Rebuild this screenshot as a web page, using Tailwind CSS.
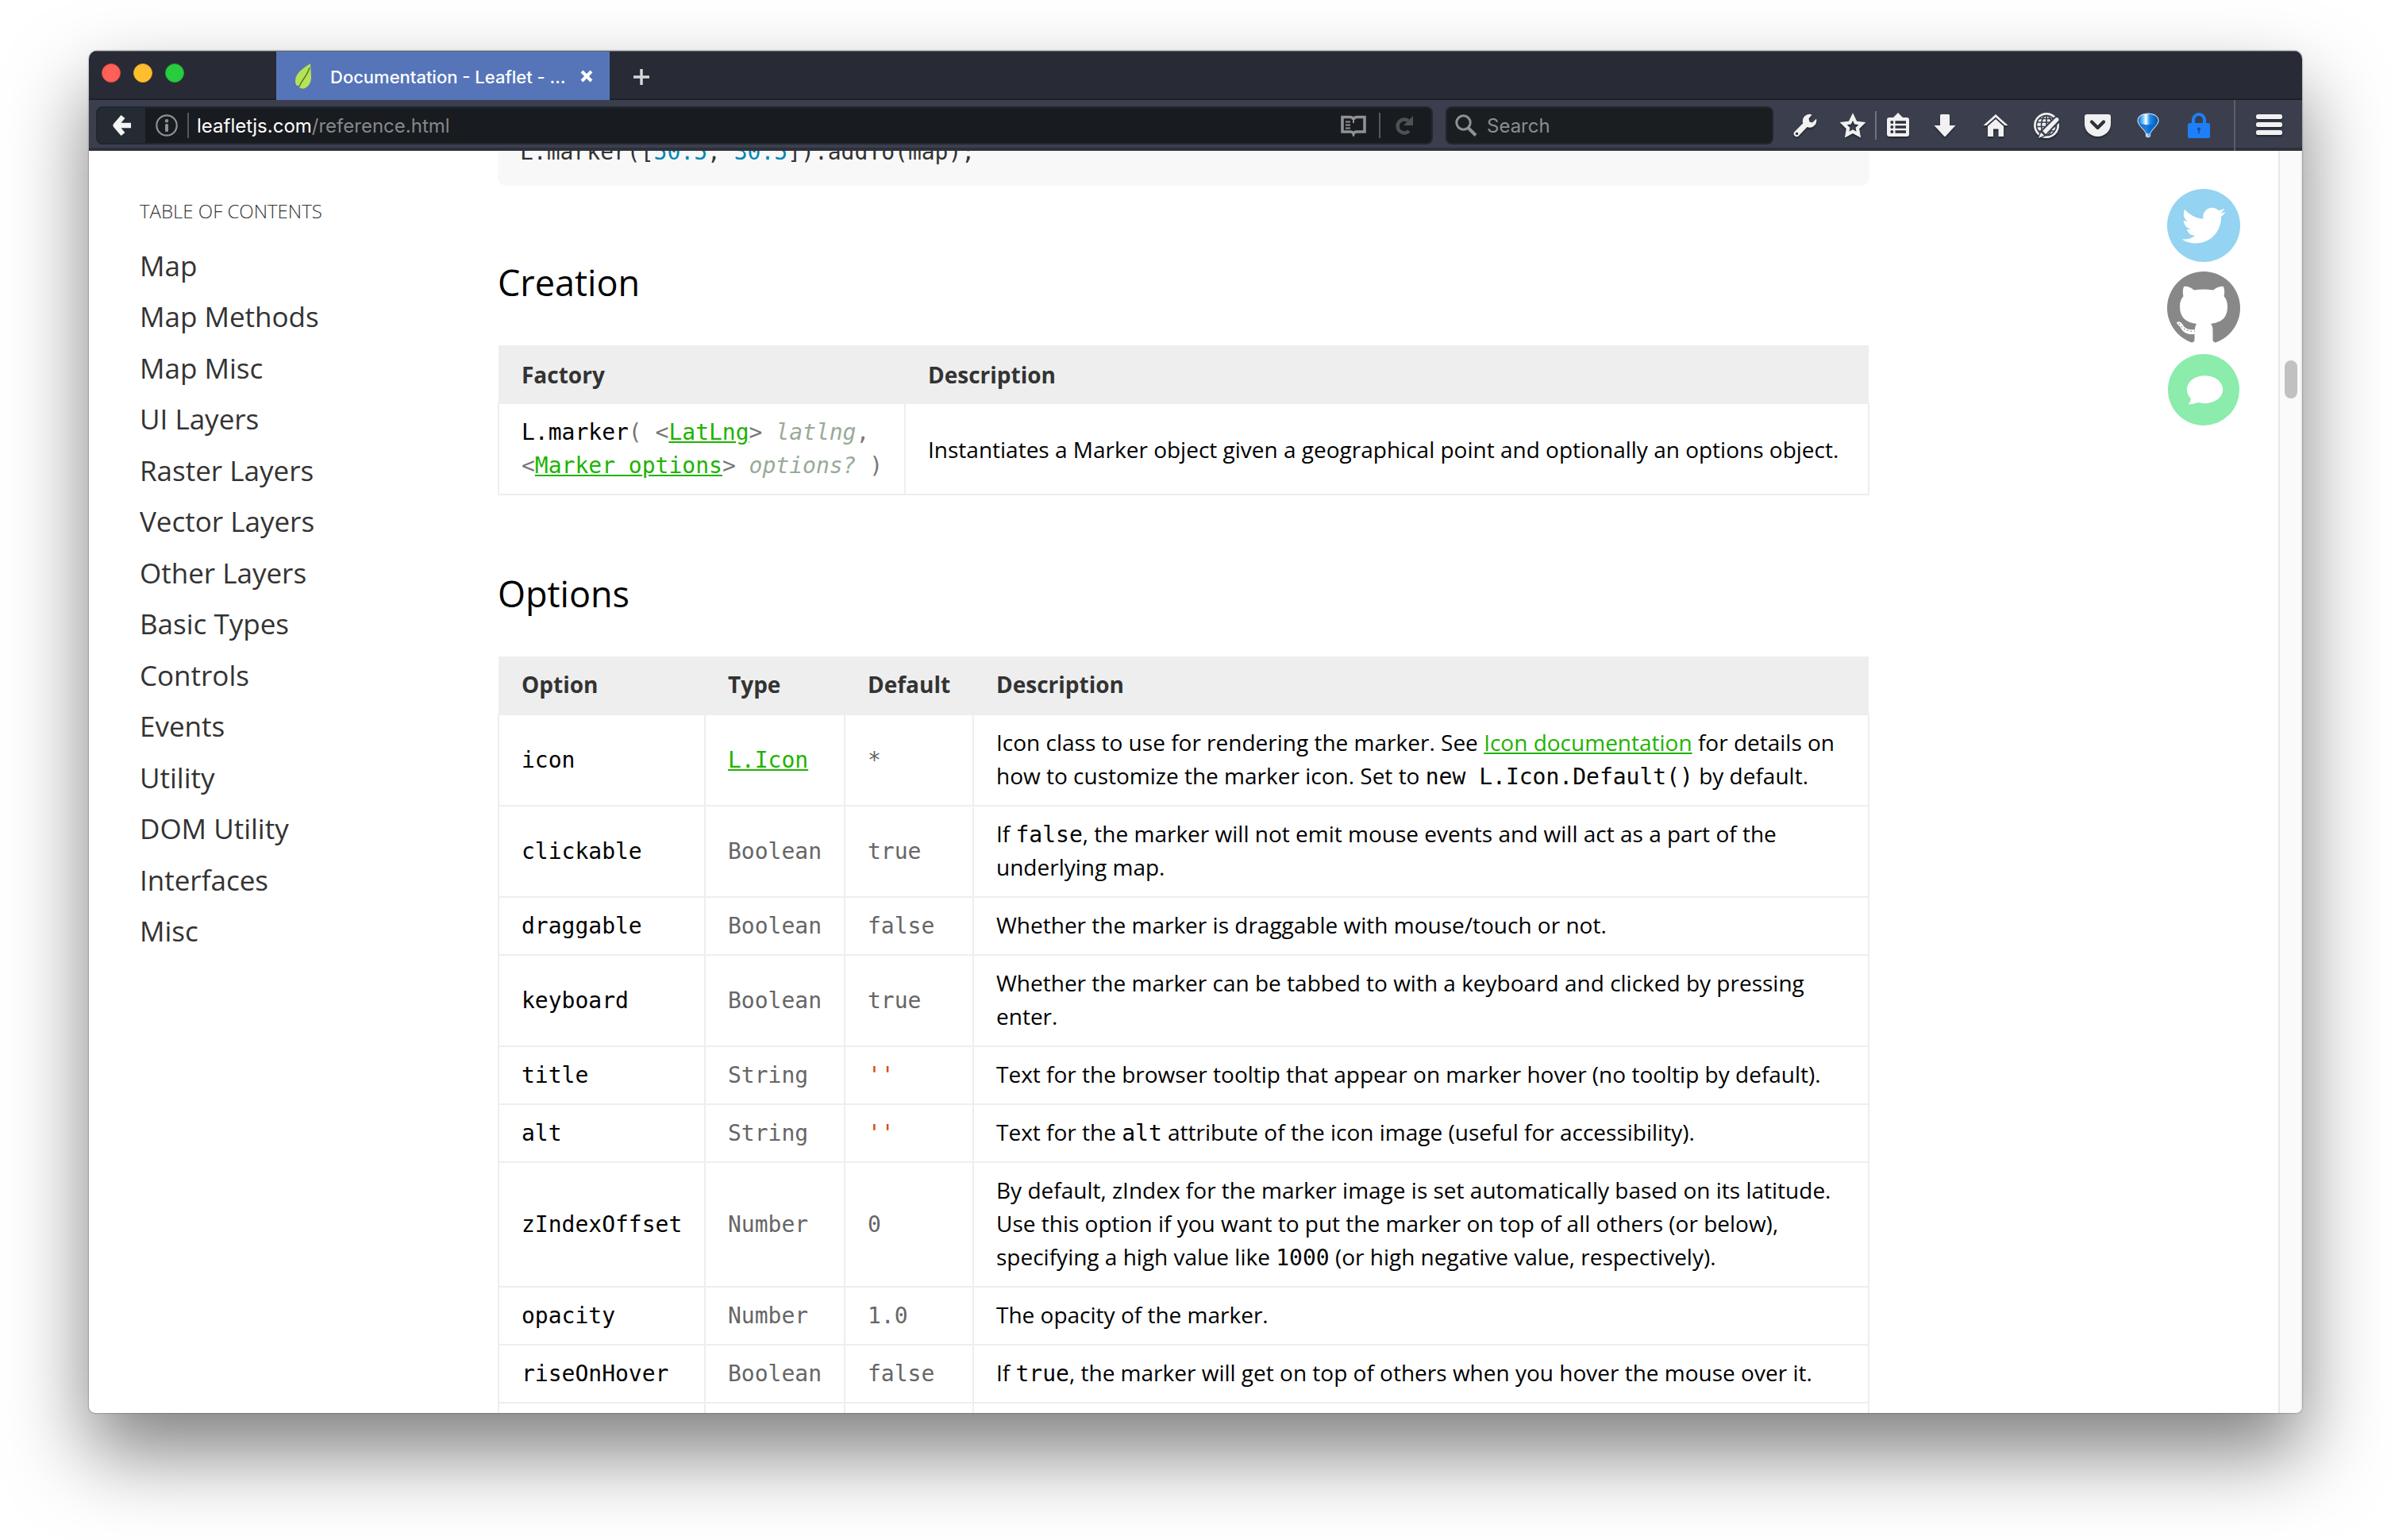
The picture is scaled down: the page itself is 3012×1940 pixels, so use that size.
<!DOCTYPE html>
<html lang="en">
<head>
<meta charset="utf-8">
<title>Documentation - Leaflet</title>
<script src="https://cdn.jsdelivr.net/npm/@tailwindcss/browser@4"></script>
</head>
<body class="h-screen overflow-hidden bg-white px-28 pt-16 pb-40 font-['Open_Sans',sans-serif] text-[28px] leading-[42px] text-black">
<div class="flex h-full flex-col overflow-hidden rounded-t-[10px] rounded-b-[8px] bg-white shadow-[0_0_2px_rgba(0,0,0,0.6),0_50px_100px_rgba(0,0,0,0.5)]">

<header class="shrink-0 font-[Inter,sans-serif]">
  <!-- Tab strip -->
  <div class="flex h-[62px] items-stretch border-t border-b-2 border-t-[#5b6068] border-b-[#1d2028] bg-[#282b35]">
    <div class="flex w-[236px] gap-4 pt-[15px] pl-4">
      <button aria-label="Close" class="size-6 rounded-full border border-[#e2463f] bg-[#ff6058]"></button>
      <button aria-label="Minimise" class="size-6 rounded-full border border-[#e1a325] bg-[#ffbe2f]"></button>
      <button aria-label="Zoom" class="size-6 rounded-full border border-[#1aab29] bg-[#29cb41]"></button>
    </div>
    <div class="-mb-0.5 flex w-[420px] items-center bg-[#5675b9] pr-[21px] pl-6 text-white">
      <svg class="h-8 w-5 shrink-0" viewBox="0 0 20 32"><path d="M19 0C10 6 0 12 0 22c0 3 1 5 2 6l2-.5C5 31 8 32 11 31.5c6-2 9-8 9-14C20 11 19 5 19 0Z" fill="#b5e358"/><path d="M18 5C15 16 9 19 5 29" stroke="#5b7a26" fill="none" stroke-width="1.5"/></svg>
      <span class="ml-6 flex-1 pt-0.5 text-[22px] leading-8 font-medium whitespace-nowrap">Documentation - Leaflet - …</span>
      <button aria-label="Close tab"><svg class="size-4" viewBox="0 0 16 16" stroke="#fff" stroke-width="4"><path d="M2 2l12 12M14 2L2 14"/></svg></button>
    </div>
    <button aria-label="New tab" class="ml-[30px] pt-1"><svg class="size-5" viewBox="0 0 20 20" stroke="#d6d7d9" stroke-width="3.5"><path d="M10 0v20M0 10h20"/></svg></button>
  </div>

  <!-- Navigation toolbar -->
  <div class="flex h-16 items-center bg-[#3b3f4d] pl-[9px] text-2xl leading-8 shadow-[inset_0_-4px_0_#2e313c]">
    <div class="flex h-12 flex-1 items-center overflow-hidden rounded-lg border-2 border-[#22262e] bg-[#181b1f]">
      <button aria-label="Back" class="flex h-full w-[60px] items-center justify-center bg-[#252b33]"><svg class="h-7 w-6" viewBox="0 0 24 28" fill="none" stroke="#f4f4f4" stroke-width="6.5" stroke-linejoin="round"><path d="M14 3L4.500 14L14 25M5 14H24"/></svg></button>
      <button aria-label="Site information" class="ml-[13px]"><svg class="size-7" viewBox="0 0 28 28"><circle cx="14" cy="14" r="12.7" fill="none" stroke="#8f9194" stroke-width="2.2"/><circle cx="14" cy="8.200" r="2.200" fill="#8f9194"/><rect x="12" y="12" width="4" height="10" rx="1.500" fill="#8f9194"/></svg></button>
      <span class="ml-3 h-8 w-0.5 bg-[#55585c]"></span>
      <span class="ml-2.5 flex-1 pt-0.5 text-[#85888b]"><span class="text-white">leafletjs.com</span>/reference.html</span>
      <button aria-label="Reader view"><svg class="h-7 w-8" viewBox="0 0 32 28"><path d="M2 3.500H11.500C14 3.500 16 5 16 7C16 5 18 3.500 20.500 3.500H30V22H20C18 22 16.500 23 16 24.500C15.500 23 14 22 12 22H2Z" fill="none" stroke="#8f9194" stroke-width="3.600"/><path d="M16 6V11M6 9.500h6M6 13.500h6M6 17.500h6" stroke="#8f9194" stroke-width="2"/></svg></button>
      <span class="ml-4 h-8 w-0.5 bg-[#55585c]"></span>
      <button aria-label="Reload" class="mr-[22px] ml-[18px]"><svg class="size-6" viewBox="0 0 24 24"><path d="M18 19A8.500 8.500 0 1 1 17 6" fill="none" stroke="#4f5154" stroke-width="4.500"/><path d="M23 0V12H11Z" fill="#4f5154"/></svg></button>
    </div>
    <label class="ml-4 flex h-12 w-[413px] items-center rounded-lg border-2 border-[#22262e] bg-[#1a1e21] pl-2.5">
      <svg class="h-7 w-7" viewBox="0 0 28 28" fill="none" stroke="#8f9194"><circle cx="10.500" cy="10.500" r="8.700" stroke-width="3"/><path d="M16.500 17L26 26.500" stroke-width="4"/></svg>
      <input type="search" aria-label="Search" placeholder="Search" class="ml-3 w-72 bg-transparent pt-0.5 outline-none placeholder:text-[#8a8d91]">
    </label>
    <div class="ml-2 flex h-full items-center text-[#f1f1f2]">
      <button aria-label="Developer tools" class="flex w-16 justify-center drop-shadow-[0_2px_1px_rgba(0,0,0,0.4)]"><svg class="size-8" viewBox="0 0 32 32" fill="currentColor"><path fill-rule="evenodd" d="M24.500 2.500L20.500 7.500L21.500 11.500L25 12.500L30 7.800A8.600 8.600 0 0 1 18.500 18L8 29A3.600 3.600 0 0 1 2.800 23.800L13.300 13.300A8.600 8.600 0 0 1 24.500 2.500ZM5.500 24.800a1.700 1.700 0 1 0 .1 0Z"/></svg></button>
      <button aria-label="Bookmark this page" class="flex w-14 justify-center drop-shadow-[0_2px_1px_rgba(0,0,0,0.4)]"><svg class="size-8" viewBox="0 0 32 32"><path d="M16 5L19.600 12.500L27.900 13.600L21.900 19.400L23.300 27.600L16 23.700L8.700 27.600L10.100 19.400L4.100 13.600L12.400 12.500Z" fill="none" stroke="currentColor" stroke-width="4.200"/></svg></button>
      <span class="h-9 w-0.5 bg-[#6f737d]"></span>
      <button aria-label="Bookmarks menu" class="flex w-[54px] justify-center drop-shadow-[0_2px_1px_rgba(0,0,0,0.4)]"><svg class="size-8" viewBox="0 0 32 32"><path d="M16 0l6 6h5a3 3 0 0 1 3 3v18a3 3 0 0 1-3 3H5a3 3 0 0 1-3-3V9a3 3 0 0 1 3-3h5Z" fill="currentColor"/><g fill="#2e313c"><circle cx="8.300" cy="12" r="2"/><circle cx="8.300" cy="18" r="2"/><circle cx="8.300" cy="24" r="2"/><path d="M12.500 10.300h13.500v3.400H12.500zM12.500 16.300h13.500v3.400H12.500zM12.500 22.300h13.500v3.400H12.500z"/></g></svg></button>
      <button aria-label="Downloads" class="flex w-16 justify-center drop-shadow-[0_2px_1px_rgba(0,0,0,0.4)]"><svg class="size-8" viewBox="0 0 32 32" fill="currentColor"><path d="M11.500 2h9a1.500 1.500 0 0 1 1.500 1.500V16h7.500L17 29.500q-1 1-2 0L2.500 16H10V3.500A1.500 1.500 0 0 1 11.500 2Z"/></svg></button>
      <button aria-label="Home" class="flex w-16 justify-center drop-shadow-[0_2px_1px_rgba(0,0,0,0.4)]"><svg class="size-8" viewBox="0 0 32 32" fill="currentColor"><path d="M16 2L31.500 16H27.500L16 5.800L4.500 16H.5Z"/><path d="M16 8L26 17V30H19.500V20.500H13V30H6V17Z"/></svg></button>
      <button aria-label="Web editor" class="flex w-16 justify-center drop-shadow-[0_2px_1px_rgba(0,0,0,0.4)]"><svg class="size-8" viewBox="0 0 32 32"><circle cx="16" cy="16" r="16" fill="currentColor"/><g fill="none" stroke="#3b3f4d" stroke-width="1.700"><circle cx="16" cy="16" r="12.500"/><ellipse cx="16" cy="16" rx="6.500" ry="12.500"/><path d="M16 3.500v25M4 12h24M3.500 17.500h25M6 23h20M7 7.500h18"/></g><path d="M5 32L8 23L28 3.500L35 10L14 30Z" fill="#3b3f4d"/><path d="M6 32L9 25L13 28.500ZM11 23L27.500 6.500Q30 5 31.500 8L31.500 9.500L15 27Z" fill="currentColor"/></svg></button>
      <button aria-label="Save to Pocket" class="flex w-16 justify-center drop-shadow-[0_2px_1px_rgba(0,0,0,0.4)]"><svg class="h-8 w-[33px]" viewBox="0 0 33 32"><path d="M3 2H30a3 3 0 0 1 3 3V14a16.500 16 0 0 1-33 0V5a3 3 0 0 1 3-3Z" fill="currentColor"/><path d="M9 11.500L16.500 19L24 11.500" fill="none" stroke="#2e313c" stroke-width="4.200" stroke-linecap="round" stroke-linejoin="round"/></svg></button>
      <button aria-label="Balloon extension" class="flex w-16 justify-center"><svg class="size-8" viewBox="0 0 32 32"><defs><linearGradient id="balloon"><stop offset="0" stop-color="#0a5fc0"/><stop offset=".25" stop-color="#6fc4ff"/><stop offset=".4" stop-color="#fff"/><stop offset=".58" stop-color="#1f92ee"/><stop offset="1" stop-color="#0348a0"/></linearGradient></defs><path d="M16 1C24 1 29 5 29 10C29 16 20 21 18.500 26V29.500Q16 32 13.500 29.500V26C12 21 3 16 3 10C3 5 8 1 16 1Z" fill="url(#balloon)" stroke="#c9dcf0" stroke-width="1.200"/><path d="M4.500 13.500Q16 17 27.500 13.500C25 18 20 21.500 18 26H14C12 21.500 7 18 4.500 13.500Z" fill="#0467d2" opacity=".85"/></svg></button>
      <button aria-label="Lock extension" class="flex w-16 justify-center"><svg class="size-8" viewBox="0 0 32 32"><path d="M9 15V9a7 7 0 0 1 14 0V15" fill="none" stroke="#1e7ff8" stroke-width="4"/><rect x="2" y="13" width="28" height="19" rx="2.500" fill="#1e7ff8"/><circle cx="16" cy="20.500" r="2" fill="#174a9c"/><path d="M16 20v6" stroke="#174a9c" stroke-width="1.600"/></svg></button>
      <span class="ml-3 h-full w-0.5 bg-[#5a5e6a]"></span>
      <button aria-label="Open menu" class="flex w-[84px] justify-center drop-shadow-[0_2px_1px_rgba(0,0,0,0.4)]"><svg class="h-8 w-[33px]" viewBox="0 0 33 32" fill="currentColor"><rect y="2" width="33" height="6" rx="2.500"/><rect y="12" width="33" height="6" rx="2.500"/><rect y="22" width="33" height="6" rx="2.500"/></svg></button>
    </div>
  </div>
</header>

<div class="flex min-h-0 flex-1 overflow-hidden">
  <!-- Table of contents -->
  <nav class="w-[515px] shrink-0 pt-[60px] pl-16">
    <p class="text-2xl leading-8 font-light text-[#333]">TABLE OF CONTENTS</p>
    <ul class="mt-[21px] text-[35px] leading-[64px] text-[#333] *:even:mb-px">
      <li><a href="#map">Map</a></li>
      <li><a href="#map-methods">Map Methods</a></li>
      <li><a href="#map-misc">Map Misc</a></li>
      <li><a href="#ui-layers">UI Layers</a></li>
      <li><a href="#raster-layers">Raster Layers</a></li>
      <li><a href="#vector-layers">Vector Layers</a></li>
      <li><a href="#other-layers">Other Layers</a></li>
      <li><a href="#basic-types">Basic Types</a></li>
      <li><a href="#controls">Controls</a></li>
      <li><a href="#events">Events</a></li>
      <li><a href="#utility">Utility</a></li>
      <li><a href="#dom-utility">DOM Utility</a></li>
      <li><a href="#interfaces">Interfaces</a></li>
      <li><a href="#misc">Misc</a></li>
    </ul>
  </nav>

  <main class="min-w-0 flex-1">
    <pre class="-mt-11 rounded-[10px] bg-[#f8f8f8] pt-[25px] pr-7 pb-[21px] pl-7 font-['DejaVu_Sans_Mono',monospace] text-[#333]"><code class="font-['DejaVu_Sans_Mono',monospace]">L.marker([<span class="text-[#0086b3]">50.5</span>, <span class="text-[#0086b3]">30.5</span>]).addTo(map);</code></pre>

    <h3 class="mt-[92px] mb-[49px] text-[45px] leading-[60px]">Creation</h3>
    <table class="w-full table-fixed border-collapse [&_td]:border-2 [&_td]:border-[#eee] [&_td]:px-7 [&_td]:pt-[15px] [&_td]:pb-3.5 [&_th]:px-[29px] [&_th]:pt-4 [&_th]:pb-3.5">
      <colgroup><col class="w-[512px]"><col></colgroup>
      <thead class="bg-[#eee] text-left font-bold text-[#333]"><tr><th>Factory</th><th>Description</th></tr></thead>
      <tbody><tr>
        <td class="font-['DejaVu_Sans_Mono',monospace] whitespace-nowrap text-[#777]"><b class="font-normal text-black">L.marker</b>( &lt;<a href="#latlng" class="text-[#1eb300] underline">LatLng</a>&gt; <i class="text-[#99aa99]">latlng</i>,<br>&lt;<a href="#marker-options" class="text-[#1eb300] underline">Marker options</a>&gt; <i class="text-[#99aa99]">options?</i> )</td>
        <td>Instantiates a Marker object given a geographical point and optionally an options object.</td>
      </tr></tbody>
    </table>

    <h3 class="mt-[94px] mb-[49px] text-[45px] leading-[60px]">Options</h3>
    <table class="w-full table-fixed border-collapse [&_code]:font-['DejaVu_Sans_Mono',monospace] [&_code]:text-[28px] [&_code]:leading-none [&_td]:border-2 [&_td]:border-[#eee] [&_td]:px-7 [&_td]:pt-[13px] [&_td]:pb-4 [&_th]:px-[29px] [&_th]:pt-3.5 [&_th]:pb-4">
      <colgroup><col class="w-[260px]"><col class="w-[176px]"><col class="w-[162px]"><col></colgroup>
      <thead class="bg-[#eee] text-left font-bold text-[#333]"><tr><th>Option</th><th>Type</th><th>Default</th><th>Description</th></tr></thead>
      <tbody>
        <tr><td><code>icon</code></td><td><code><a href="#icon" class="text-[#1eb300] underline">L.Icon</a></code></td><td><code class="text-[#666]">*</code></td><td>Icon class to use for rendering the marker. See <a href="#icon" class="text-[#1eb300] underline">Icon documentation</a> for details on how to customize the marker icon. Set to <code>new L.Icon.Default()</code> by default.</td></tr>
        <tr><td><code>clickable</code></td><td><code class="text-[#666]">Boolean</code></td><td><code class="text-[#666]">true</code></td><td>If <code>false</code>, the marker will not emit mouse events and will act as a part of the underlying map.</td></tr>
        <tr><td><code>draggable</code></td><td><code class="text-[#666]">Boolean</code></td><td><code class="text-[#666]">false</code></td><td>Whether the marker is draggable with mouse/touch or not.</td></tr>
        <tr><td><code>keyboard</code></td><td><code class="text-[#666]">Boolean</code></td><td><code class="text-[#666]">true</code></td><td>Whether the marker can be tabbed to with a keyboard and clicked by pressing enter.</td></tr>
        <tr><td><code>title</code></td><td><code class="text-[#666]">String</code></td><td><code class="text-[#d9480f]">''</code></td><td>Text for the browser tooltip that appear on marker hover (no tooltip by default).</td></tr>
        <tr><td><code>alt</code></td><td><code class="text-[#666]">String</code></td><td><code class="text-[#d9480f]">''</code></td><td>Text for the <code>alt</code> attribute of the icon image (useful for accessibility).</td></tr>
        <tr><td><code>zIndexOffset</code></td><td><code class="text-[#666]">Number</code></td><td><code class="text-[#666]">0</code></td><td>By default, zIndex for the marker image is set automatically based on its latitude. Use this option if you want to put the marker on top of all others (or below), specifying a high value like <code>1000</code> (or high negative value, respectively).</td></tr>
        <tr><td><code>opacity</code></td><td><code class="text-[#666]">Number</code></td><td><code class="text-[#666]">1.0</code></td><td>The opacity of the marker.</td></tr>
        <tr><td><code>riseOnHover</code></td><td><code class="text-[#666]">Boolean</code></td><td><code class="text-[#666]">false</code></td><td>If <code>true</code>, the marker will get on top of others when you hover the mouse over it.</td></tr>
        <tr><td></td><td></td><td></td><td></td></tr>
      </tbody>
    </table>
  </main>

  <!-- Social links -->
  <aside class="flex w-[515px] shrink-0 flex-col items-end gap-3 pt-12 pr-12">
    <a href="#twitter" aria-label="Twitter"><svg class="size-[92px]" viewBox="0 0 92 92"><circle cx="46" cy="46" r="46" fill="#94d3f1"/><path transform="translate(18.500 18.500) scale(2.300)" fill="#fff" d="M23.953 4.57a10 10 0 01-2.825.775 4.958 4.958 0 002.163-2.723c-.951.555-2.005.959-3.127 1.184a4.92 4.92 0 00-8.384 4.482C7.69 8.095 4.067 6.13 1.64 3.162a4.822 4.822 0 00-.666 2.475c0 1.71.87 3.213 2.188 4.096a4.904 4.904 0 01-2.228-.616v.06a4.923 4.923 0 003.946 4.827 4.996 4.996 0 01-2.212.085 4.936 4.936 0 004.604 3.417 9.867 9.867 0 01-6.102 2.105c-.39 0-.779-.023-1.17-.067a13.995 13.995 0 007.557 2.209c9.053 0 13.998-7.496 13.998-13.985 0-.21 0-.42-.015-.63A9.935 9.935 0 0024 4.59z"/></svg></a>
    <a href="#github" aria-label="GitHub"><svg class="size-[92px]" viewBox="0 0 92 92"><circle cx="46" cy="46" r="46" fill="#888"/><path fill="#fff" d="M21 19C26 18 31 21 34 23.500C42 22 50 22 58 23.500C61 21 67 18 71 19C72.500 23 72.500 28 71.500 31C75 35 76 39 76 44C76 58 69 64 55 66C57 68 57.500 71 57.500 74V86Q57.500 89 60.500 89L58 92H34L31.500 89Q34.500 89 34.500 86V79C24 80 20 76 17 71C15.500 68 13 67 12 65C13 62 17 63 19 66C22 71 25 74 35 73C35 70 36 68 37 66C23 64 16 58 16 44C16 39 17 35 20.500 31C19.500 28 19.500 23 21 19Z"/><path d="M15 65.500C20 71 22 76 35 75" fill="none" stroke="#888" stroke-width="1.200" stroke-dasharray="1.500 3"/></svg></a>
    <a href="#forum" aria-label="Forum"><svg class="size-[92px]" viewBox="0 0 92 92"><circle cx="46" cy="45" r="45" fill="#8becab"/><ellipse cx="47.500" cy="44.700" rx="22.700" ry="17.500" fill="#fff"/><path d="M27 52L30 57Q29 61 26.500 63.500Q33 63 39 61L40 50Z" fill="#fff"/></svg></a>
  </aside>

  <!-- Scrollbar -->
  <div class="w-[30px] shrink-0 border-r-2 border-l-2 border-r-[#efefef] border-l-[#e8e8e8] bg-[#fafafa] pt-[264px] pl-1.5">
    <div class="h-12 w-4 rounded-full bg-[#c1c1c1]"></div>
  </div>
</div>
</div>
</body>
</html>
